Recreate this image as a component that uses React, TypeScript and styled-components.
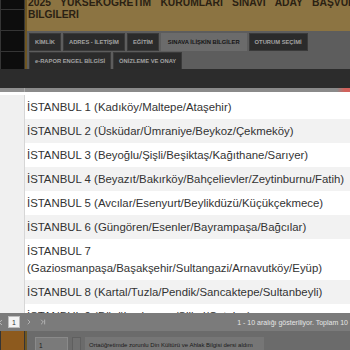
import React from "react";
import styled, { createGlobalStyle } from "styled-components";
import { ChevronLeft, ChevronRight, ChevronLast } from "lucide-react";

const GlobalStyle = createGlobalStyle`
  html, body {
    margin: 0;
    padding: 0;
    width: 350px;
    height: 350px;
    overflow: hidden;
    background: #6b6b6b;
    font-family: "Liberation Sans", Arial, sans-serif;
  }
  #root {
    position: relative;
    width: 350px;
    height: 350px;
    overflow: hidden;
  }
`;

// background page (already dimmed by the modal)
const Page = styled.div`
  display: flex;
  margin-top: -3px;
  min-height: 353px;
`;

const Sidebar = styled.div`
  width: 25px;
  flex-shrink: 0;
  display: flex;
  flex-direction: column;
  background: #0d0d0d;
  border-right: 2px solid #6e5622;
`;

const SideItem = styled.div<{ $first?: boolean; $active?: boolean }>`
  box-sizing: border-box;
  flex-shrink: 0;
  height: ${(p) => (p.$first ? "13px" : p.$active ? "26px" : "21px")};
  margin-top: ${(p) => (p.$active ? "2px" : "0")};
  border: 1px solid #353535;
  border-top: none;
  background: ${(p) => (p.$active ? "#8d5a1e" : "#0d0d0d")};
`;

const Main = styled.div`
  flex: 1;
  min-width: 0;
  display: flex;
  flex-direction: column;
  background: #8c7442;
`;

const Title = styled.h1`
  margin: 0;
  padding: 0 0 10px 1px;
  font-size: 10.3px;
  line-height: 12px;
  font-weight: bold;
  color: #2a2113;
`;

const TitleLine = styled.div<{ $spread?: boolean }>`
  white-space: nowrap;
  overflow: hidden;
  word-spacing: ${(p) => (p.$spread ? "6.5px" : "0")};
`;

const TabBar = styled.div`
  display: flex;
  flex-wrap: wrap;
  gap: 1px 2px;
  padding: 2px 0 0 2px;
  background: #5d5d5d;
`;

const Tab = styled.div<{ $active?: boolean }>`
  box-sizing: border-box;
  height: 18px;
  padding: 0 ${(p) => (p.$active ? "6px" : "5px")};
  display: flex;
  align-items: center;
  font-size: 5.8px;
  font-weight: bold;
  background: ${(p) => (p.$active ? "#6b6b6b" : "#2b2b2b")};
  color: ${(p) => (p.$active ? "#141414" : "#a3a3a3")};
  border: 1px solid ${(p) => (p.$active ? "#6b6b6b" : "#3a3a3a")};
`;

const Content = styled.div`
  flex: 1;
  background: #6b6b6b;
`;

const FieldRow = styled.div`
  height: 25px;
  padding-left: 8px;
  display: flex;
  align-items: center;
  font-size: 7px;
  color: #1a1a1a;
`;

const SectionHeading = styled.h2`
  margin: 0;
  padding-left: 6px;
  font-size: 13px;
  line-height: 14px;
  font-weight: bold;
  color: #1a1a1a;
  white-space: nowrap;
  overflow: hidden;
  letter-spacing: 0.6px;
`;

const AnswerRow = styled.div`
  display: flex;
  align-items: stretch;
  gap: 4px;
  margin-top: 3px;
  padding-left: 8px;
  height: 16px;
`;

const NumberBox = styled.div`
  box-sizing: border-box;
  width: 33px;
  padding-left: 3px;
  display: flex;
  align-items: center;
  font-size: 6.5px;
  color: #1a1a1a;
  background: #7a7a7a;
  border: 1px solid #8a8a8a;
`;

const CheckBox = styled.div`
  box-sizing: border-box;
  width: 9px;
  background: #707070;
  border: 1px solid #5f5f5f;
`;

const AnswerLabel = styled.div`
  width: 175px;
  padding-left: 4px;
  display: flex;
  align-items: center;
  font-size: 6px;
  color: #1a1a1a;
  background: #767676;
  white-space: nowrap;
`;

// popup list
const Popup = styled.div`
  position: absolute;
  top: 69px;
  left: 0;
  width: 350px;
  height: 262px;
  display: flex;
  flex-direction: column;
  background: #fff;
  z-index: 10;
`;

const PopupHeader = styled.div`
  height: 19px;
  background: #2c2c2c;
`;

const ColumnHeader = styled.div`
  height: 4px;
  display: flex;
`;

const NumHead = styled.div`
  width: 24px;
  background: #8f8f8f;
  border-right: 1px solid #a8a8a8;
`;

const NameHead = styled.div`
  flex: 1;
  background: #8a8a8a;
`;

const CloseTip = styled.div`
  width: 13px;
  background: linear-gradient(to right, #8a8a8a, #d2625c 60%);
`;

const ListBody = styled.div`
  flex: 1;
  overflow: hidden;
  padding-top: 3px;
  background: #fff;
`;

const Row = styled.div<{ $alt?: boolean }>`
  display: flex;
  background: ${(p) => (p.$alt ? "#f2f2f2" : "#fff")};
`;

const NumCell = styled.div`
  width: 24px;
  flex-shrink: 0;
  background: #f0f0f0;
  border-right: 1px solid #d6d6d6;
`;

const NameCell = styled.div`
  flex: 1;
  padding: 3.5px 2px 3.5px 2px;
  font-size: 11.4px;
  line-height: 17px;
  color: #333;
`;

const Pager = styled.div`
  height: 18px;
  display: flex;
  align-items: center;
  background: #7b7b7b;
  color: #e6e6e6;
  font-size: 7px;
`;

const PagerIcon = styled.span<{ $gap?: number }>`
  display: flex;
  margin-left: ${(p) => p.$gap ?? 0}px;
  color: #cfcfcf;
`;

const PageInput = styled.div`
  box-sizing: border-box;
  width: 12px;
  height: 12px;
  margin-left: 3px;
  padding-left: 3px;
  display: flex;
  align-items: center;
  background: #f3f3f3;
  border: 1px solid #bdbdbd;
  color: #333;
`;

const PagerInfo = styled.div`
  margin-left: auto;
  padding-right: 2px;
  white-space: nowrap;
`;

const tabs = [
  "KİMLİK",
  "ADRES - İLETİŞİM",
  "EĞİTİM",
  "SINAVA İLİŞKİN BİLGİLER",
  "OTURUM SEÇİMİ",
  "e-RAPOR ENGEL BİLGİSİ",
  "ÖNİZLEME VE ONAY",
];

const regions = [
  "İSTANBUL 1 (Kadıköy/Maltepe/Ataşehir)",
  "İSTANBUL 2 (Üsküdar/Ümraniye/Beykoz/Çekmeköy)",
  "İSTANBUL 3 (Beyoğlu/Şişli/Beşiktaş/Kağıthane/Sarıyer)",
  "İSTANBUL 4 (Beyazıt/Bakırköy/Bahçelievler/Zeytinburnu/Fatih)",
  "İSTANBUL 5 (Avcılar/Esenyurt/Beylikdüzü/Küçükçekmece)",
  "İSTANBUL 6 (Güngören/Esenler/Bayrampaşa/Bağcılar)",
  "İSTANBUL 7 (Gaziosmanpaşa/Başakşehir/Sultangazi/Arnavutköy/Eyüp)",
  "İSTANBUL 8 (Kartal/Tuzla/Pendik/Sancaktepe/Sultanbeyli)",
  "İSTANBUL 9 (Büyükçekmece/Silivri/Çatalca)",
  "İSTANBUL 10 (Adalar/Şile)",
];

const hiddenFields = [
  "Sınav Merkezi Tercihi",
  "Sınav Dili",
  "Yabancı Dil",
  "Puan Türü",
  "Özel Durum",
  "Engel Durumu",
  "Sınav Ücreti",
  "Ödeme Bilgisi",
  "Bildirimler",
  "Onay",
];

export default function App() {
  return (
    <>
      <GlobalStyle />
      <Page>
        <Sidebar>
          <SideItem $first />
          {Array.from({ length: 15 }).map((_, i) => (
            <SideItem key={i} />
          ))}
          <SideItem $active />
        </Sidebar>
        <Main>
          <Title>
            <TitleLine $spread>
              2025 YÜKSEKÖĞRETİM KURUMLARI SINAVI ADAY BAŞVURU
            </TitleLine>
            <TitleLine>BİLGİLERİ</TitleLine>
          </Title>
          <TabBar>
            {tabs.map((t) => (
              <Tab key={t} $active={t === "SINAVA İLİŞKİN BİLGİLER"}>
                {t}
              </Tab>
            ))}
          </TabBar>
          <Content>
            {hiddenFields.map((f) => (
              <FieldRow key={f}>{f}</FieldRow>
            ))}
            <SectionHeading>DİN KÜLTÜRÜ VE AHLAK BİLGİSİ DERSİ DURUMU</SectionHeading>
            <AnswerRow>
              <NumberBox>1</NumberBox>
              <CheckBox />
              <AnswerLabel>
                Ortaöğretimde zorunlu Din Kültürü ve Ahlak Bilgisi dersi aldım
              </AnswerLabel>
            </AnswerRow>
          </Content>
        </Main>
      </Page>

      <Popup>
        <PopupHeader />
        <ColumnHeader>
          <NumHead />
          <NameHead />
          <CloseTip />
        </ColumnHeader>
        <ListBody>
          {regions.map((r, i) => (
            <Row key={r} $alt={i % 2 === 1}>
              <NumCell />
              <NameCell>{r}</NameCell>
            </Row>
          ))}
        </ListBody>
        <Pager>
          <PagerIcon $gap={-4}>
            <ChevronLeft size={9} strokeWidth={2} />
          </PagerIcon>
          <PageInput>1</PageInput>
          <PagerIcon $gap={5}>
            <ChevronRight size={8} strokeWidth={2} />
          </PagerIcon>
          <PagerIcon $gap={6}>
            <ChevronLast size={8} strokeWidth={2} />
          </PagerIcon>
          <PagerInfo>1 - 10 aralığı gösteriliyor. Toplam 10</PagerInfo>
        </Pager>
      </Popup>
    </>
  );
}
